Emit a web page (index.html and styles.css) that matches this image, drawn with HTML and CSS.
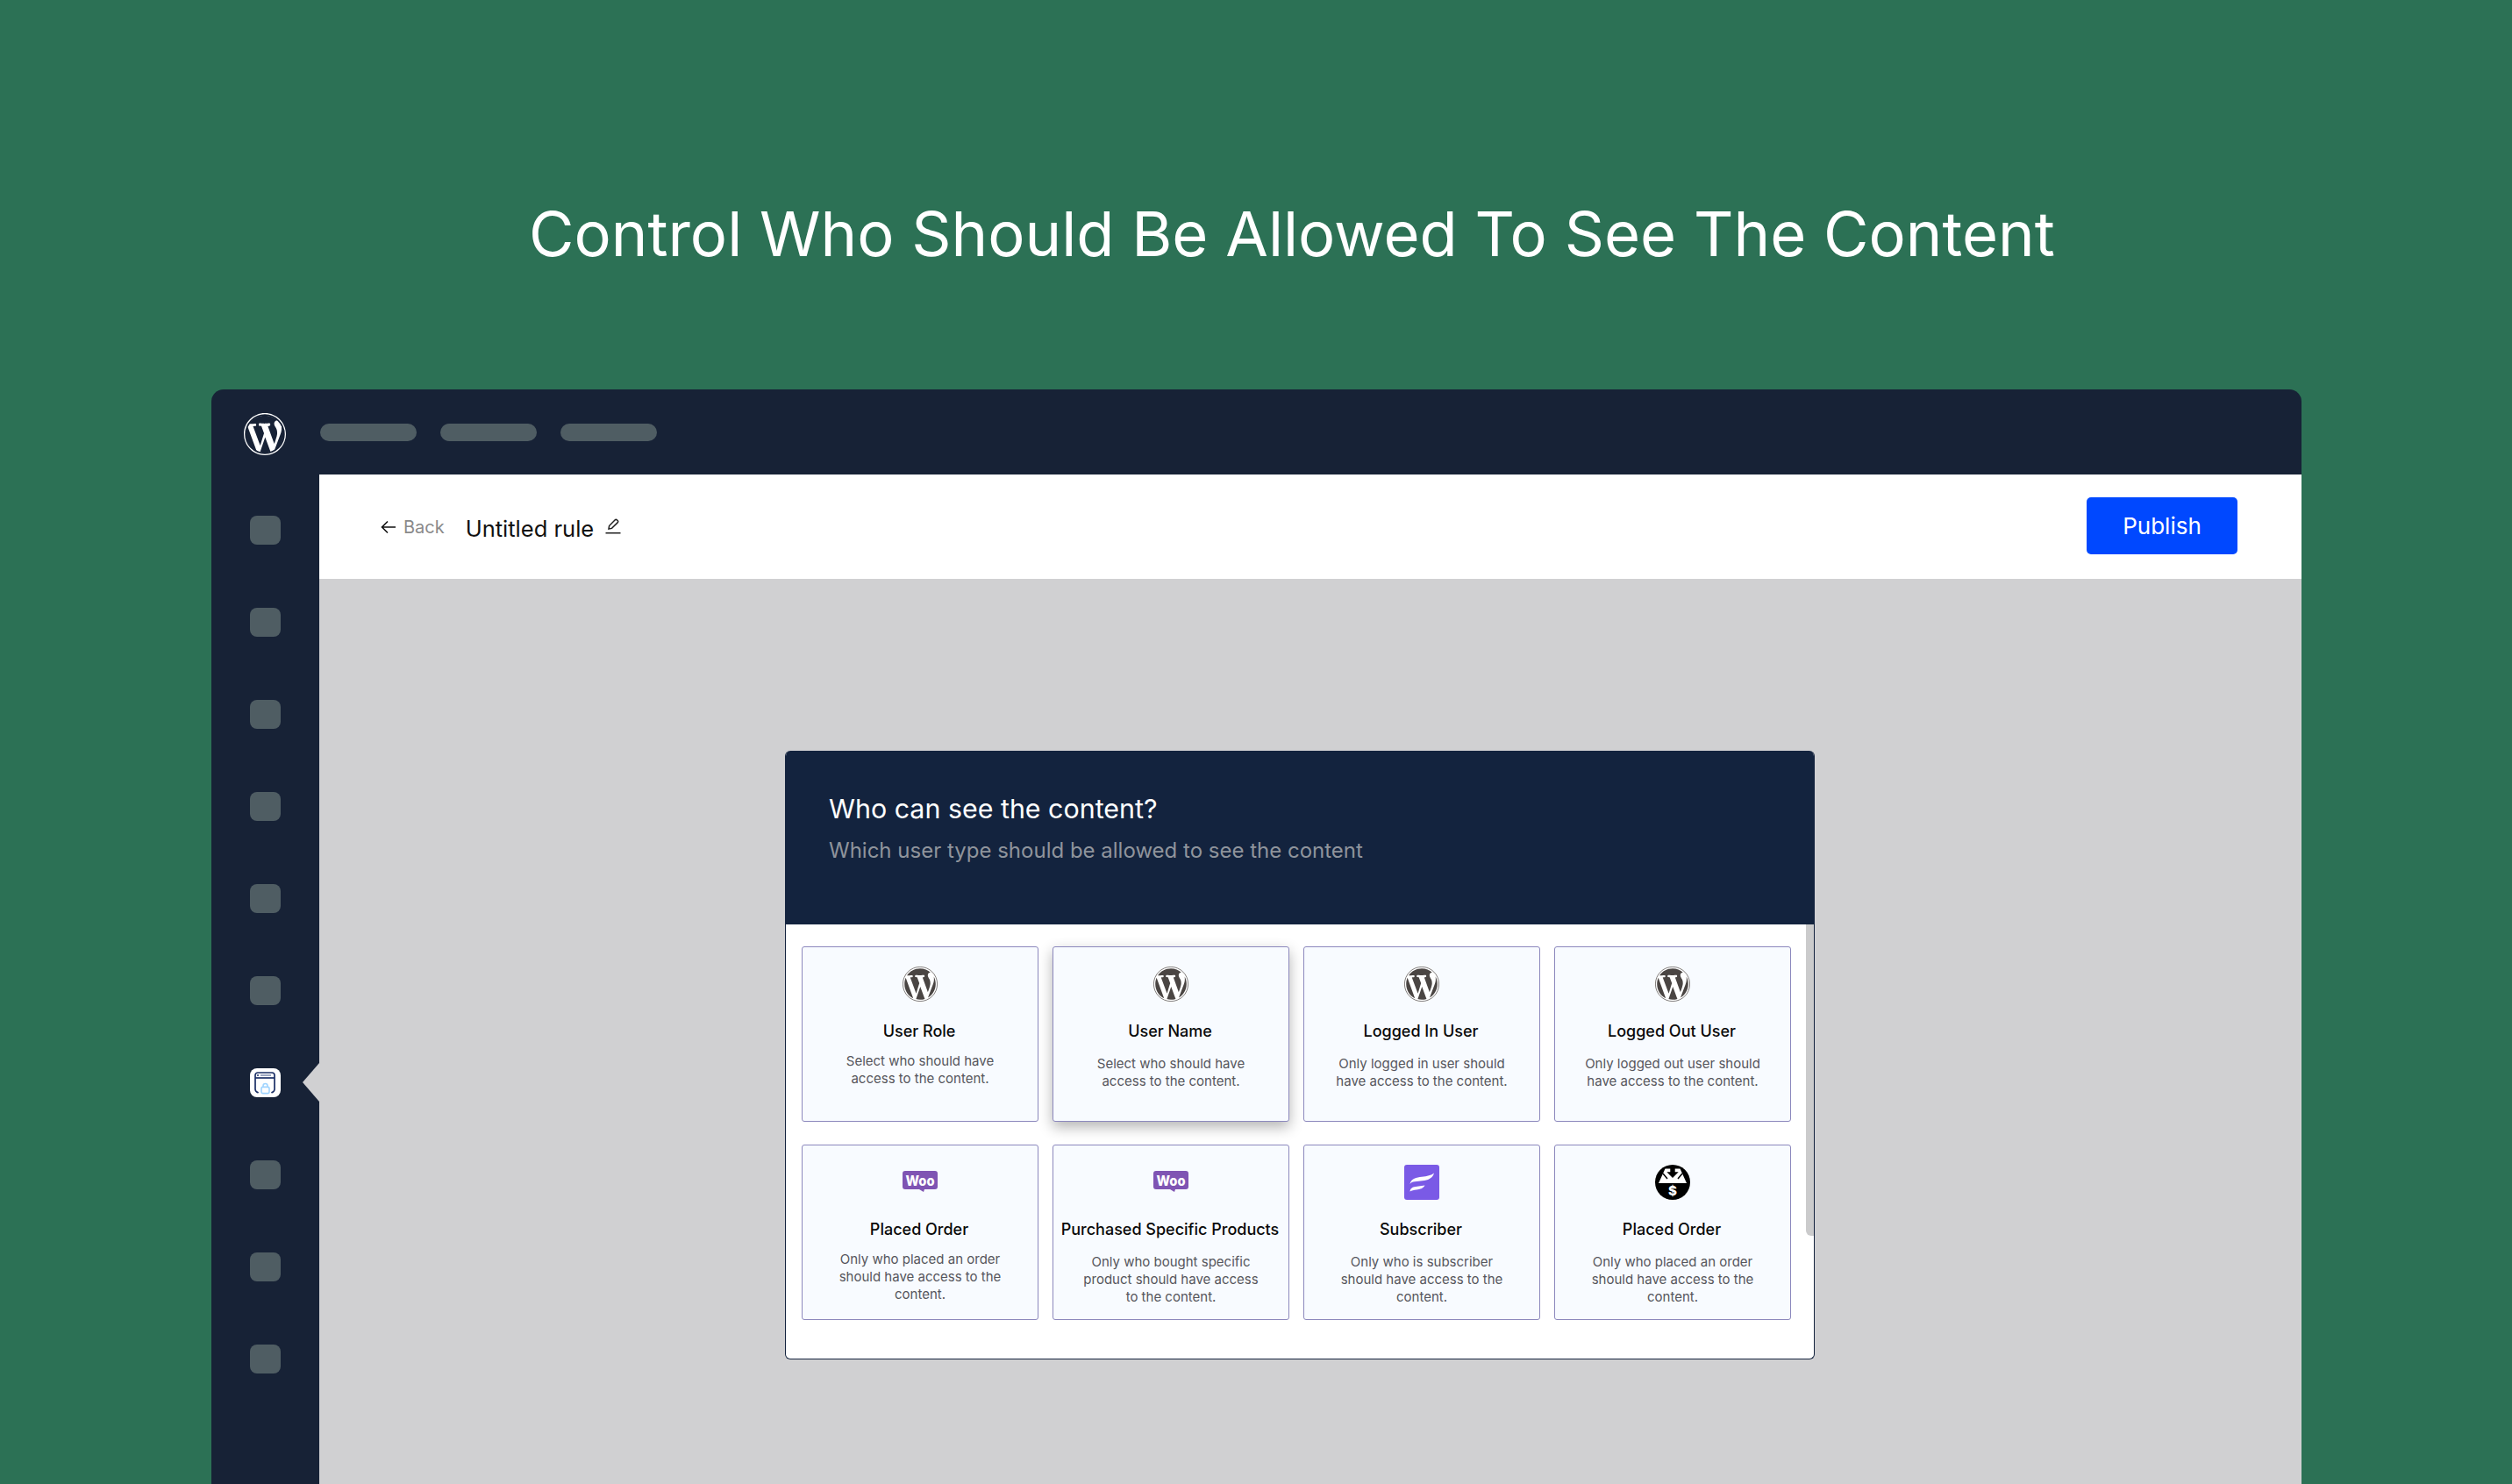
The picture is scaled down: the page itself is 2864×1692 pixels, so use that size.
FILE: index.html
```
<!DOCTYPE html>
<html>
    <head>
        <meta charset="utf-8">
        <title>Control Who Should Be Allowed To See The Content</title>
        <link rel="stylesheet" href="styles.css">
    </head>
    <body>
        <svg class="defs" width="0" height="0">
            <symbol id="wp" viewBox="0 0 20 20">
                <path d="M20 10c0-5.520-4.480-10-10-10S0 4.480 0 10s4.480 10 10 10 10-4.480 10-10zM7.780 15.370L4.370 6.220c.55-.02 1.170-.08 1.170-.08.5-.06.44-1.130-.06-1.110 0 0-1.450.11-2.370.11-.18 0-.37 0-.58-.01C4.120 2.690 6.870 1.110 10 1.110c2.330 0 4.450.87 6.050 2.340-.68-.11-1.650.39-1.650 1.580 0 .74.45 1.360.9 2.100.35.61.55 1.360.55 2.460 0 1.490-1.400 5-1.400 5l-3.030-8.370c.54-.02.82-.17.82-.17.5-.05.44-1.250-.06-1.220 0 0-1.440.12-2.380.12-.87 0-2.330-.12-2.330-.12-.5-.03-.56 1.200-.06 1.220l.92.08 1.260 3.410zM17.410 10c.24-.64.74-1.870.43-4.250.7 1.290 1.050 2.710 1.050 4.250 0 3.290-1.730 6.240-4.400 7.780.97-2.590 1.940-5.200 2.920-7.780zM6.100 18.090C3.120 16.650 1.110 13.530 1.110 10c0-1.300.23-2.480.72-3.590C3.250 10.300 4.670 14.200 6.100 18.090zm4.030-6.630l2.580 6.980c-.86.29-1.760.45-2.710.45-.79 0-1.570-.11-2.290-.33.81-2.380 1.620-4.740 2.420-7.100z"/>
            </symbol>
            <symbol id="wp-card" viewBox="0 0 20 20">
                <circle cx="10" cy="10" r="9.3" fill="#4a4543"/>
                <use href="#wp" width="20" height="20" fill="#fff"/>
                <circle cx="10" cy="10" r="9.8" fill="none" stroke="#4a4543" stroke-width=".35"/>
            </symbol>
            <symbol id="wp-top" viewBox="0 0 20 20">
                <use href="#wp" width="20" height="20" fill="#fff"/>
                <circle cx="10" cy="10" r="9.1" fill="none" stroke="#172236" stroke-width=".75"/>
            </symbol>
            <symbol id="woo" viewBox="0 0 40 24">
                <path fill="#7f54b3" d="M3 0h34a3 3 0 0 1 3 3v15a3 3 0 0 1-3 3H25l-1 3-5-3H3a3 3 0 0 1-3-3V3a3 3 0 0 1 3-3z"/>
            </symbol>
        </svg>

        <h1 class="headline">Control Who Should Be Allowed To See The Content</h1>

        <div class="window">
            <div class="topbar">
                <svg class="topbar-logo"><use href="#wp-top"/></svg>
                <span class="pill"></span>
                <span class="pill"></span>
                <span class="pill"></span>
            </div>

            <div class="main">
                <div class="sidebar">
                    <span class="side-item"></span>
                    <span class="side-item"></span>
                    <span class="side-item"></span>
                    <span class="side-item"></span>
                    <span class="side-item"></span>
                    <span class="side-item"></span>
                    <span class="side-item active">
                        <svg viewBox="0 0 34 33" width="34" height="33">
                            <path d="M6 24V8a3 3 0 0 1 3-3h16a3 3 0 0 1 3 3v16a4 4 0 0 1-3 3.600M6 24a4 4 0 0 0 3 3.600" fill="none" stroke="#1b2f66" stroke-width="1.700" stroke-linecap="round"/>
                            <path d="M6 11h22" stroke="#1b2f66" stroke-width="1.700"/>
                            <path d="M12 8h12" stroke="#8b97b5" stroke-width="1.700"/>
                            <circle cx="9" cy="8" r="1" fill="#1b2f66"/>
                            <rect x="13" y="21.400" width="9" height="7.200" rx="1.600" fill="none" stroke="#9fd4ff" stroke-width="1.600"/>
                            <path d="M15 21.400v-1.400a2.500 2.500 0 0 1 5 0v1.400" fill="none" stroke="#9fd4ff" stroke-width="1.500"/>
                        </svg>
                    </span>
                    <span class="side-item"></span>
                    <span class="side-item"></span>
                    <span class="side-item"></span>
                </div>

                <div class="content">
                    <div class="pagebar">
                        <a class="back">
                            <svg viewBox="0 0 18 16" width="18" height="16"><path d="M8 1.500L1.500 8 8 14.500M1.500 8H17" fill="none" stroke="#111" stroke-width="1.600"/></svg>
                            Back
                        </a>
                        <span class="rule-name">Untitled rule</span>
                        <svg class="edit" viewBox="0 0 18 18" width="18" height="18"><path d="M4 12l.6-3.400L11 2c.8-.8 1.800-.8 2.600 0l.5.5c.7.7.7 1.700 0 2.400L7.500 11.400zM.5 16.800h17" fill="none" stroke="#222" stroke-width="1.500"/></svg>
                        <button class="publish">Publish</button>
                    </div>

                    <div class="stage">
                        <div class="modal">
                            <div class="modal-head">
                                <h2>Who can see the content?</h2>
                                <p>Which user type should be allowed to see the content</p>
                            </div>
                            <div class="modal-body">
                                <div class="cards">
                                    <div class="card tight">
                                        <svg class="card-icon"><use href="#wp-card"/></svg>
                                        <h3>User Role</h3>
                                        <p>Select who should have access to the content.</p>
                                    </div>
                                    <div class="card hovered">
                                        <svg class="card-icon"><use href="#wp-card"/></svg>
                                        <h3>User Name</h3>
                                        <p>Select who should have access to the content.</p>
                                    </div>
                                    <div class="card">
                                        <svg class="card-icon"><use href="#wp-card"/></svg>
                                        <h3>Logged In User</h3>
                                        <p>Only logged in user should have access to the content.</p>
                                    </div>
                                    <div class="card">
                                        <svg class="card-icon"><use href="#wp-card"/></svg>
                                        <h3>Logged Out User</h3>
                                        <p>Only logged out user should have access to the content.</p>
                                    </div>
                                    <div class="card tight">
                                        <svg class="card-icon woo-icon" viewBox="0 0 40 24">
                                            <use href="#woo" width="40" height="24"/>
                                            <text x="20" y="16.500" text-anchor="middle" textLength="33" lengthAdjust="spacingAndGlyphs" class="woo-text">Woo</text>
                                        </svg>
                                        <h3>Placed Order</h3>
                                        <p>Only who placed an order should have access to the content.</p>
                                    </div>
                                    <div class="card">
                                        <svg class="card-icon woo-icon" viewBox="0 0 40 24">
                                            <use href="#woo" width="40" height="24"/>
                                            <text x="20" y="16.500" text-anchor="middle" textLength="33" lengthAdjust="spacingAndGlyphs" class="woo-text">Woo</text>
                                        </svg>
                                        <h3>Purchased Specific Products</h3>
                                        <p>Only who bought specific product should have access<br>to the content.</p>
                                    </div>
                                    <div class="card">
                                        <svg class="card-icon" viewBox="0 0 40 40">
                                            <rect width="40" height="40" rx="3" fill="#7a5ae6"/>
                                            <path fill="#fff" d="M6.500 22C8 15.500 14 14.500 20 13.800c6-.7 11-1.800 14-4.300-1 4.500-5 7.500-11 8.500l-11 1.200c-2.500.4-4.500 1-5.500 2.800z"/>
                                            <path fill="#fff" d="M6.500 30.500C7 27 9 25.500 13 25l10.500-1.500c-2 3.500-5.500 4.500-9.500 5-3 .4-5.500 1-7.500 2z"/>
                                        </svg>
                                        <h3>Subscriber</h3>
                                        <p>Only who is subscriber should have access to the content.</p>
                                    </div>
                                    <div class="card">
                                        <svg class="card-icon" viewBox="0 0 40 40">
                                            <circle cx="20" cy="20" r="20" fill="#000"/>
                                            <path fill="#fff" d="M4 21L11.500 4.500h17L36 21z"/>
                                            <path fill="#000" d="M17.300 2h5.400v6.300h4L20 15l-6.700-6.700h4z"/>
                                            <path stroke="#000" stroke-width="1.500" d="M9 10l5 6M31 10l-5 6"/>
                                            <text x="20" y="34.500" text-anchor="middle" class="dollar">$</text>
                                        </svg>
                                        <h3>Placed Order</h3>
                                        <p>Only who placed an order should have access to the content.</p>
                                    </div>
                                </div>
                                <span class="scrollbar"></span>
                            </div>
                        </div>
                    </div>
                </div>
            </div>
        </div>
    </body>
</html>
```

FILE: styles.css
```
* {
    box-sizing: border-box;
}

body {
    margin: 0;
    height: 1692px;
    overflow: hidden;
    background: #2c7155;
    font-family: Inter, "Liberation Sans", sans-serif;
}

.defs {
    position: absolute;
}

.woo-text {
    font-family: Inter, sans-serif;
    font-size: 16px;
    font-weight: 800;
    fill: #fff;
}

.dollar {
    font-family: Inter, sans-serif;
    font-size: 15px;
    font-weight: 800;
    fill: #fff;
}

.headline {
    margin: 0;
    height: 444px;
    padding: 225px 0 0 603px;
    font-size: 70.5px;
    line-height: 84px;
    font-weight: 400;
    color: #fff;
    white-space: nowrap;
}

.window {
    margin-left: 241px;
    width: 2383px;
    height: 1248px;
    border-radius: 14px 14px 0 0;
    overflow: hidden;
    background: #172236;
}

.topbar {
    height: 97px;
    display: flex;
    align-items: center;
    gap: 27px;
    padding: 0 0 0 37px;
}

.topbar-logo {
    width: 48px;
    height: 48px;
    margin: 4px 12px 0 0;
}

.pill {
    width: 110px;
    height: 20px;
    margin-top: 1px;
    border-radius: 10px;
    background: #4f5d63;
}

.main {
    display: flex;
    height: 1151px;
}

.sidebar {
    width: 123px;
    flex: none;
    display: flex;
    flex-direction: column;
    gap: 72px;
    padding: 47px 0 0 44px;
}

.side-item {
    display: block;
    width: 35px;
    height: 33px;
    border-radius: 8px;
    background: #4f5d63;
    position: relative;
}

.side-item.active {
    background: #fff;
}

.side-item.active svg {
    display: block;
}

.side-item.active::after {
    content: "";
    position: absolute;
    left: 60px;
    top: -6px;
    border-style: solid;
    border-width: 22px 19px 22px 0;
    border-color: transparent #d0d0d2 transparent transparent;
}

.content {
    flex: 1;
    background: #d0d0d2;
}

.pagebar {
    height: 119px;
    background: #fff;
    display: flex;
    align-items: center;
    padding: 0 73px 0 70px;
}

.back {
    display: flex;
    align-items: center;
    gap: 8px;
    font-size: 20px;
    color: #8a8a8a;
}

.rule-name {
    margin: 3px 0 0 24px;
    font-size: 25.500px;
    color: #111;
}

.edit {
    margin: -1px 0 0 13px;
}

.publish {
    margin-left: auto;
    width: 172px;
    height: 65px;
    margin-top: -2px;
    border: 0;
    border-radius: 5px;
    background: #0048ff;
    color: #fff;
    font-family: inherit;
    font-size: 26px;
}

.stage {
    padding: 196px 0 0 531px;
}

.modal {
    width: 1174px;
    height: 694px;
    border-radius: 6px;
    overflow: hidden;
    background: #fff;
    border: 1px solid #14233e;
    border-top: 0;
}

.modal-head {
    height: 198px;
    margin: 0 -1px;
    padding: 46px 0 0 50px;
    background: #13233e;
}

.modal-head h2 {
    margin: 0;
    font-size: 30.400px;
    line-height: 40px;
    font-weight: 400;
    color: #fff;
}

.modal-head p {
    margin: 10px 0 0;
    font-size: 24px;
    line-height: 36px;
    color: #8f949c;
}

.modal-body {
    position: relative;
    height: 495px;
    padding: 25px 0 0 18px;
}

.cards {
    width: 1128px;
    display: grid;
    grid-template-columns: repeat(4, 270px);
    grid-auto-rows: 200px;
    gap: 26px 16px;
}

.card {
    border: 1px solid #8c88bd;
    border-radius: 3px;
    background: #f8fbff;
    padding-top: 22px;
    text-align: center;
}

.card.hovered {
    box-shadow: 0 6px 16px rgba(0, 0, 0, 0.3);
}

.card-icon {
    display: block;
    width: 40px;
    height: 40px;
    margin: 0 auto;
}

.woo-icon {
    height: 24px;
    margin: 7px auto 29px;
}

.card h3 {
    margin: 20px 0 0;
    padding-right: 2px;
    font-size: 18px;
    line-height: 28px;
    font-weight: 500;
    color: #0a0a0a;
    white-space: nowrap;
}

.card p {
    margin: 13px 32px 0;
    font-size: 15px;
    line-height: 20px;
    color: #56565c;
}

.card.tight p {
    margin-top: 10px;
}

.scrollbar {
    position: absolute;
    right: 0;
    top: 0;
    width: 9px;
    height: 355px;
    border-radius: 0 0 0 6px;
    background: #cbcbcc;
}
```
